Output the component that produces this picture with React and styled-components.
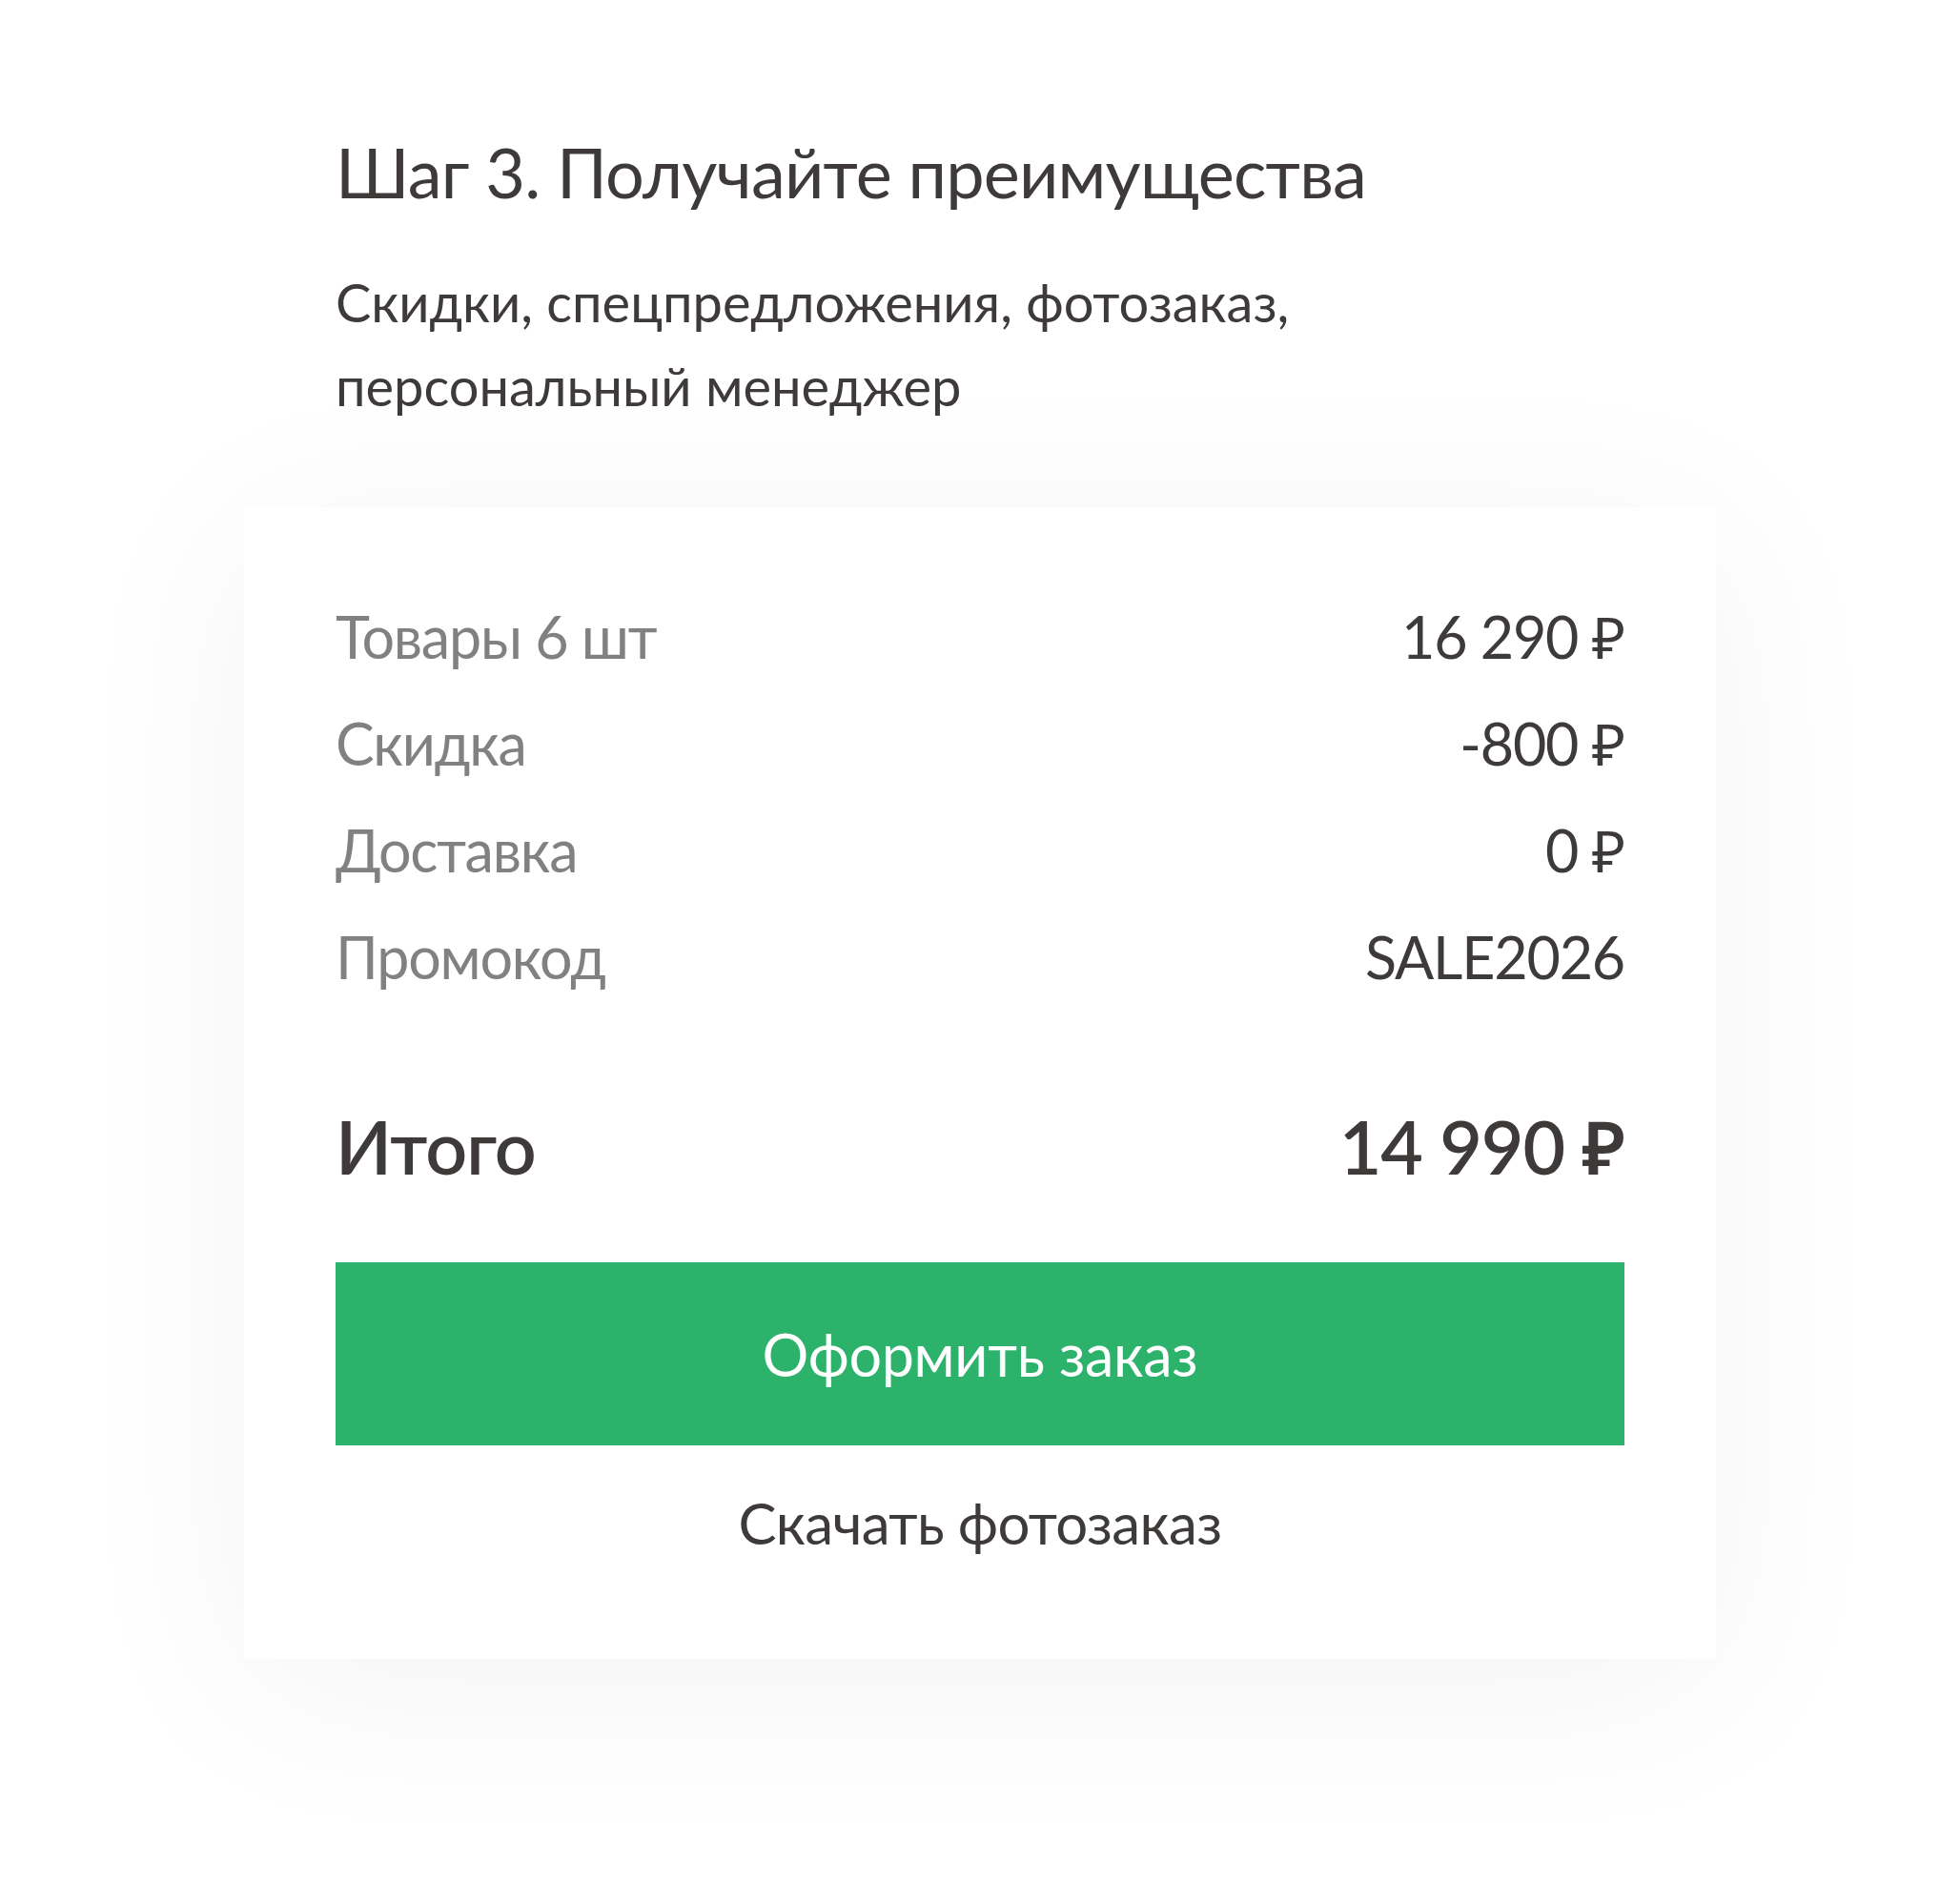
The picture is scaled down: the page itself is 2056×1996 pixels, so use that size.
import React from 'react';
import styled, { createGlobalStyle } from 'styled-components';

const COLORS = {
  text: '#3e3a39',
  muted: '#818181',
  green: '#2cb26b',
  white: '#ffffff',
};

const FONT = `"Lato", "Noto Sans", "DejaVu Sans", sans-serif`;

const GlobalStyle = createGlobalStyle`
  html, body {
    margin: 0;
    padding: 0;
    background: ${COLORS.white};
  }
  body {
    font-family: ${FONT};
    color: ${COLORS.text};
  }
`;

const Page = styled.div`
  width: 2056px;
  min-height: 1996px;
  padding-top: 140px;
  box-sizing: border-box;
`;

const Section = styled.section`
  margin-left: 256px;
  width: 1544px;
`;

const Intro = styled.div`
  padding: 0 96px;
`;

const Title = styled.h2`
  margin: 0;
  font-size: 72px;
  line-height: 80px;
  font-weight: 400;
  letter-spacing: -0.8px;
  color: ${COLORS.text};
`;

const Lead = styled.p`
  margin: 53px 0 0;
  font-size: 56px;
  line-height: 88px;
  color: ${COLORS.text};
`;

const Card = styled.div`
  margin-top: 83px;
  background: ${COLORS.white};
  box-shadow: 0 30px 190px rgba(0, 0, 0, 0.05);
  padding: 80px 96px 103px;
  display: flex;
  flex-direction: column;
`;

const Rows = styled.dl`
  margin: 0;
  display: flex;
  flex-direction: column;
`;

const Row = styled.div`
  display: flex;
  justify-content: space-between;
  align-items: baseline;
  font-size: 61px;
  line-height: 112px;
  letter-spacing: -1.2px;
`;

const Label = styled.dt`
  color: ${COLORS.muted};
`;

const Value = styled.dd`
  margin: 0;
  color: ${COLORS.text};
`;

const Total = styled.div`
  margin-top: 92px;
  display: flex;
  justify-content: space-between;
  align-items: baseline;
  font-size: 77px;
  line-height: 100px;
  font-weight: 600;
  letter-spacing: -1px;
  color: ${COLORS.text};
`;

const SubmitButton = styled.button`
  margin-top: 72px;
  height: 192px;
  border: none;
  background: ${COLORS.green};
  color: ${COLORS.white};
  font-family: ${FONT};
  font-size: 61px;
  letter-spacing: -0.3px;
  cursor: pointer;
`;

const DownloadLink = styled.a`
  margin-top: 41px;
  align-self: center;
  font-size: 60px;
  line-height: 80px;
  letter-spacing: -0.6px;
  color: ${COLORS.text};
  text-decoration: none;
  cursor: pointer;
`;

const items = [
  { label: 'Товары 6 шт', value: '16 290 ₽' },
  { label: 'Скидка', value: '-800 ₽' },
  { label: 'Доставка', value: '0 ₽' },
  { label: 'Промокод', value: 'SALE2026' },
];

export default function App() {
  return (
    <>
      <GlobalStyle />
      <Page>
        <Section>
          <Intro>
            <Title>Шаг 3. Получайте преимущества</Title>
            <Lead>
              Скидки, спецпредложения, фотозаказ,
              <br />
              персональный менеджер
            </Lead>
          </Intro>
          <Card>
            <Rows>
              {items.map((item) => (
                <Row key={item.label}>
                  <Label>{item.label}</Label>
                  <Value>{item.value}</Value>
                </Row>
              ))}
            </Rows>
            <Total>
              <span>Итого</span>
              <span>14 990 ₽</span>
            </Total>
            <SubmitButton type="button">Оформить заказ</SubmitButton>
            <DownloadLink>Скачать фотозаказ</DownloadLink>
          </Card>
        </Section>
      </Page>
    </>
  );
}
